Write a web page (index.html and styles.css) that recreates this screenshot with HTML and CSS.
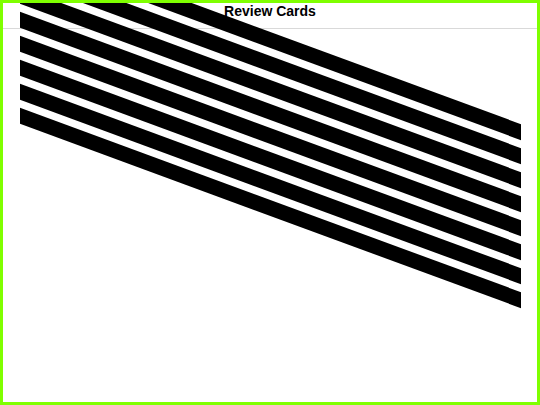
FILE: index.html
```html
<!DOCTYPE html>
<html>
<head>
<meta charset="utf-8">
<link rel="stylesheet" href="styles.css">
</head>
<body>
<header class="topbar">Review Cards</header>
<ul class="cards">
  <li class="card"></li>
  <li class="card"></li>
  <li class="card"></li>
  <li class="card"></li>
  <li class="card"></li>
  <li class="card"></li>
  <li class="card"></li>
  <li class="card"></li>
</ul>
</body>
</html>
```
FILE: styles.css
```css
html, body {
  margin: 0;
  padding: 0;
}
body {
  box-sizing: border-box;
  width: 540px;
  height: 405px;
  border: 3px solid #7fff00;
  background: #fff;
  font-family: "Liberation Sans", Arial, sans-serif;
  overflow: hidden;
}
.topbar {
  padding: 0 0 9px;
  line-height: 16px;
  font-size: 14px;
  font-weight: bold;
  text-align: center;
  color: #000;
  border-bottom: 1px solid #d9d9d9;
}
.cards {
  list-style: none;
  margin: 3px 0 0;
  padding: 0 0 0 17px;
  display: flex;
  flex-direction: column;
  gap: 8px;
}
.card {
  width: 501px;
  height: 16px;
  background: #000;
  transform: skewY(20.2deg);
}
```
